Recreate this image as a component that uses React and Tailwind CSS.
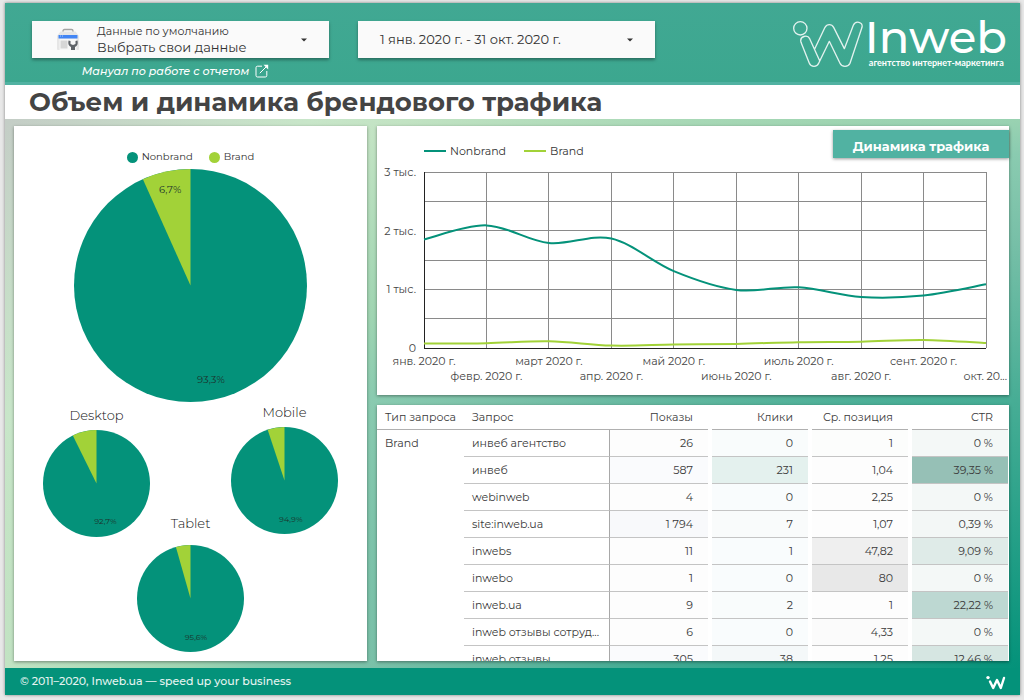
import React from "react";

const NONBRAND = "#04927a";
const BRAND = "#a2d238";

const months = [
  { label: "янв. 2020 г.", nonbrand: 1850, brand: 75 },
  { label: "февр. 2020 г.", nonbrand: 2090, brand: 82 },
  { label: "март 2020 г.", nonbrand: 1790, brand: 116 },
  { label: "апр. 2020 г.", nonbrand: 1865, brand: 42 },
  { label: "май 2020 г.", nonbrand: 1310, brand: 58 },
  { label: "июнь 2020 г.", nonbrand: 990, brand: 70 },
  { label: "июль 2020 г.", nonbrand: 1035, brand: 100 },
  { label: "авг. 2020 г.", nonbrand: 870, brand: 108 },
  { label: "сент. 2020 г.", nonbrand: 895, brand: 138 },
  { label: "окт. 20...", nonbrand: 1085, brand: 85 },
];

const rows = [
  { query: "инвеб агентство", shows: "26", clicks: "0", position: "1", ctr: "0 %", colors: ["bg-[#fdfdfd]", "bg-[#f9fcfc]", "bg-[#fcfdfc]", "bg-[#f4f8f7]"] },
  { query: "инвеб", shows: "587", clicks: "231", position: "1,04", ctr: "39,35 %", colors: ["bg-[#fafbfd]", "bg-[#e4f1ee]", "bg-[#fdfdfd]", "bg-[#96c0b6]"] },
  { query: "webinweb", shows: "4", clicks: "0", position: "2,25", ctr: "0 %", colors: ["bg-[#fdfdfd]", "bg-[#f9fcfd]", "bg-[#fdfdfd]", "bg-[#f4f8f7]"] },
  { query: "site:inweb.ua", shows: "1 794", clicks: "7", position: "1,07", ctr: "0,39 %", colors: ["bg-[#f8f9fb]", "bg-[#f9fbfb]", "bg-[#fdfdfd]", "bg-[#f3f7f6]"] },
  { query: "inwebs", shows: "11", clicks: "1", position: "47,82", ctr: "9,09 %", colors: ["bg-[#fdfdfd]", "bg-[#f9fcfd]", "bg-[#efefef]", "bg-[#dfebe8]"] },
  { query: "inwebo", shows: "1", clicks: "0", position: "80", ctr: "0 %", colors: ["bg-[#fdfdfd]", "bg-[#f9fcfd]", "bg-[#e8e8e8]", "bg-[#f4f8f7]"] },
  { query: "inweb.ua", shows: "9", clicks: "2", position: "1", ctr: "22,22 %", colors: ["bg-[#fdfdfd]", "bg-[#f9fcfc]", "bg-[#fdfdfd]", "bg-[#bdd8d2]"] },
  { query: "inweb отзывы сотруд...", shows: "6", clicks: "0", position: "4,33", ctr: "0 %", colors: ["bg-[#fdfdfd]", "bg-[#f9fcfd]", "bg-[#fbfbfb]", "bg-[#f4f8f7]"] },
  { query: "inweb отзывы", shows: "305", clicks: "38", position: "1,25", ctr: "12,46 %", colors: ["bg-[#fafbfd]", "bg-[#f4f8f9]", "bg-[#fdfdfd]", "bg-[#d6e6e2]"] },
];

const BriefcaseIcon = () => (
  <svg className="w-6 h-6" viewBox="0 0 24 24" aria-hidden="true">
    <path d="M7 4V3Q7 1.500 8.500 1.500h7q1.500 0 1.500 1.500v1" fill="none" stroke="#a3a3a3" strokeWidth="1.3" />
    <path d="M4.500 3.500h15L23 8v13q0 1-1 1H2q-1 0-1-1V8z" fill="#e6e6e6" />
    <path d="M3.500 10.500h17V22h-17z" fill="#f7f7f7" />
    <path d="M2.500 7h19v3.500h-19z" fill="#4285f4" />
    <path d="M4 8h1M6 8h1" stroke="#a9c8fb" />
    <path d="M4.500 12.500h7v8h-7z" fill="#d6d6d6" />
    <path d="M12.500 12.500q-1 5 2.500 6.500v3h4v-3q3.500-1.500 2.500-6.500l-2 .5v3l-2.500 1-2.500-1v-3z" fill="#5f6368" />
  </svg>
);

const OpenIcon = () => (
  <svg className="w-3.5 h-3.5" viewBox="0 0 14 14" fill="none" stroke="currentColor" strokeWidth="1" aria-hidden="true">
    <path d="M7 2.200H2.500Q1 2.200 1 3.700v7.800Q1 13 2.500 13h7.800q1.500 0 1.500-1.500V7" />
    <path d="M4.800 9.200 11 3" />
    <path d="M8.500 .8h4.700v4.700z" fill="currentColor" stroke="none" />
  </svg>
);

const Caret = () => (
  <svg className="w-1.5 h-1 shrink-0" viewBox="0 0 6 4" aria-hidden="true">
    <path d="M0 .5h6L3 3.500z" fill="#333" />
  </svg>
);

const LogoMark = () => (
  <svg
    className="w-[72px] h-[49px] shrink-0"
    viewBox="65 61 216 147"
    fill="none"
    stroke="#fff"
    strokeOpacity="0.85"
    strokeWidth="4"
    strokeLinejoin="round"
    strokeLinecap="round"
    aria-hidden="true"
  >
    <circle cx="90" cy="83" r="20" />
    <path d="M148 180 118 114C111 100 87 107 92 125L117 188C122 200 140 200 145 188L177 122 209 188C214 200 234 200 239 188L275 80C279 63 255 59 249 74L222 144 190 80C184 69 170 69 164 80L133 145" />
  </svg>
);

const FooterMark = () => (
  <svg className="w-5 h-4" viewBox="0 0 20 16" fill="none" stroke="#fff" strokeWidth="2.400" strokeLinecap="round" strokeLinejoin="round" aria-hidden="true">
    <circle cx="2" cy="3.600" r="1.700" fill="#fff" stroke="none" />
    <path d="M4 7.500 7.200 14 11 6 14.800 14 18 4" />
  </svg>
);

const Pie = ({ brand, size, inset, children, label, showBrand }) => {
  const r = size / 2;
  const point = (share, radius) => {
    const angle = share * 2 * Math.PI;
    return [r + radius * Math.sin(angle), r - radius * Math.cos(angle)];
  };
  const [x, y] = point(1 - brand, r);
  const [lx, ly] = point((1 - brand) / 2, r - inset);
  const [bx, by] = point(1 - brand / 2, r - inset);

  return (
    <svg width={size} height={size} viewBox={`0 0 ${size} ${size}`} role="img" aria-label={label}>
      <circle cx={r} cy={r} r={r} fill={NONBRAND} />
      <path d={`M${r} ${r}L${x} ${y}A${r} ${r} 0 0 1 ${r} 0Z`} fill={BRAND} />
      <g textAnchor="middle" dominantBaseline="middle" fill="#1c332d" className={showBrand ? "text-[10px] font-normal" : "text-[8px] font-normal"}>
        <text x={lx} y={ly}>{children}</text>
        {showBrand && <text x={bx} y={by}>{showBrand}</text>}
      </g>
    </svg>
  );
};

const SmallPie = ({ title, brand, value, gap }) => (
  <div className={`flex flex-col items-center ${gap}`}>
    <h3 className="text-[13px] leading-5 text-[#111]">{title}</h3>
    <Pie size={107} brand={brand} inset={14} label={title}>{value}</Pie>
  </div>
);

// plot area of the line chart inside its viewBox
const LEFT = 47;
const TOP = 14;
const WIDTH = 562;
const HEIGHT = 176;

const px = (i) => LEFT + (i * WIDTH) / (months.length - 1);
const py = (value) => TOP + HEIGHT - (value / 3000) * HEIGHT;

const smoothPath = (key) => {
  const pts = months.map((m, i) => [px(i), py(m[key])]);
  let d = `M${pts[0][0]} ${pts[0][1]}`;
  for (let i = 0; i < pts.length - 1; i++) {
    const p0 = pts[i - 1] || pts[i];
    const p1 = pts[i];
    const p2 = pts[i + 1];
    const p3 = pts[i + 2] || p2;
    d += `C${p1[0] + (p2[0] - p0[0]) / 6} ${p1[1] + (p2[1] - p0[1]) / 6} ${p2[0] - (p3[0] - p1[0]) / 6} ${p2[1] - (p3[1] - p1[1]) / 6} ${p2[0]} ${p2[1]}`;
  }
  return d;
};

const LineChart = () => (
  <svg className="block w-full" viewBox="0 0 632 237" role="img" aria-label="Динамика трафика">
    <g stroke="#8a8a8a" shapeRendering="crispEdges">
      {[0, 1, 2, 3, 4, 5].map((i) => (
        <line key={i} x1={LEFT} x2={LEFT + WIDTH} y1={TOP + (i * HEIGHT) / 6} y2={TOP + (i * HEIGHT) / 6} />
      ))}
      {months.map((m, i) => (
        <line key={m.label} x1={px(i)} x2={px(i)} y1={TOP} y2={TOP + HEIGHT} />
      ))}
      <path d={`M${LEFT} ${TOP}V${TOP + HEIGHT}H${LEFT + WIDTH}`} fill="none" stroke="#222" />
    </g>
    <path d={smoothPath("nonbrand")} fill="none" stroke={NONBRAND} strokeWidth="2" />
    <path d={smoothPath("brand")} fill="none" stroke={BRAND} strokeWidth="2" />
    <g className="text-[11px] font-normal" fill="#444">
      {["0", "1 тыс.", "2 тыс.", "3 тыс."].map((t, i) => (
        <text key={t} x={LEFT - 8} y={py(i * 1000) + 4} textAnchor="end">{t}</text>
      ))}
      {months.map((m, i) => {
        const last = i === months.length - 1;
        return (
          <text key={m.label} x={last ? 630 : px(i)} y={i % 2 ? 222 : 207} textAnchor={last ? "end" : "middle"}>
            {m.label}
          </text>
        );
      })}
    </g>
  </svg>
);

const NumberCell = ({ color, children }) => (
  <td className="p-0 pr-1 last:pr-px">
    <div className={`h-[27px] leading-[26px] pr-[15px] border-b border-[#c4c4c4] text-right ${color}`}>{children}</div>
  </td>
);

const QueryTable = () => (
  <table className="w-full table-fixed border-separate border-spacing-0 text-[11px] font-normal text-[#3a3a3a]">
    <colgroup>
      <col className="w-[87px]" />
      <col />
      <col className="w-[102px]" />
      <col className="w-[100px]" />
      <col className="w-[100px]" />
      <col className="w-[97px]" />
    </colgroup>
    <thead>
      <tr>
        <th className="h-[25px] p-0 pl-2 border-b border-[#b0b0b0] text-left font-normal whitespace-nowrap">Тип запроса</th>
        <th className="h-[25px] p-0 pl-2 border-b border-[#b0b0b0] text-left font-normal">Запрос</th>
        {["Показы", "Клики", "Ср. позиция", "CTR"].map((title) => (
          <th key={title} className="p-0 pr-1 last:pr-px font-normal">
            <div className="h-[25px] leading-6 pr-[15px] border-b border-[#b0b0b0] text-right whitespace-nowrap">{title}</div>
          </th>
        ))}
      </tr>
    </thead>
    <tbody>
      {rows.map((row, i) => (
        <tr key={row.query}>
          {i === 0 && (
            <td rowSpan={rows.length} className="p-0 pl-2 align-top leading-[26px]">Brand</td>
          )}
          <td className="h-[27px] p-0 pl-2 border-b border-r border-b-[#c4c4c4] border-r-[#a8a8a8] whitespace-nowrap">{row.query}</td>
          <NumberCell color={row.colors[0]}>{row.shows}</NumberCell>
          <NumberCell color={row.colors[1]}>{row.clicks}</NumberCell>
          <NumberCell color={row.colors[2]}>{row.position}</NumberCell>
          <NumberCell color={row.colors[3]}>{row.ctr}</NumberCell>
        </tr>
      ))}
    </tbody>
  </table>
);

const App = () => {
  return (
    <div className="min-h-screen bg-[#e8e8e8] pt-[3px] pr-1 pb-[5px] pl-[5px] font-['Montserrat','Inter','Noto_Sans',sans-serif] font-light text-[#333]">
      <div className="shadow-[0_0_3px_rgba(0,0,0,0.45)]">
        <header className="flex justify-between pt-[18px] pr-[13px] pl-[27px] h-[82px] bg-gradient-to-b from-[#41a893] to-[#3ca78f] border-b-[3px] border-[#51b2a2]">
          <div className="flex items-start gap-[29px]">
            <div className="w-[297px] flex flex-col items-center">
              <button type="button" aria-haspopup="listbox" className="w-full h-[37px] flex items-center bg-[#fafafa] pl-6 pr-[22px] shadow-[0_2px_3px_rgba(0,0,0,0.35)]">
                <BriefcaseIcon />
                <span className="flex-1 pl-[17px] text-left font-normal">
                  <span className="block text-[11px] leading-[15px]">Данные по умолчанию</span>
                  <span className="block text-[13px] leading-4">Выбрать свои данные</span>
                </span>
                <Caret />
              </button>
              <a href="#manual" className="mt-[5px] pr-2.5 flex items-center gap-1.5 text-[11px] leading-4 italic font-medium text-white">
                Мануал по работе с отчетом
                <OpenIcon />
              </a>
            </div>
            <button type="button" aria-haspopup="dialog" className="w-[297px] h-[37px] flex items-center justify-between bg-[#fafafa] pl-[22px] pr-[22px] text-[13px] font-normal shadow-[0_2px_3px_rgba(0,0,0,0.35)]">
              1 янв. 2020 г. - 31 окт. 2020 г.
              <Caret />
            </button>
          </div>
          <a href="#inweb" className="flex items-start gap-px text-white" aria-label="Inweb">
            <LogoMark />
            <span className="flex flex-col">
              <span className="text-[45px] leading-8 font-medium">Inweb</span>
              <span className="pl-1 text-[9px] leading-5 font-bold font-['Lato',sans-serif]">агентство интернет-маркетинга</span>
            </span>
          </a>
        </header>

        <h1 className="pl-6 h-[34px] bg-white text-[26px] leading-[34px] font-bold text-[#444]">
          Объем и динамика брендового трафика
        </h1>

        <main className="grid grid-cols-[minmax(0,353fr)_minmax(0,632fr)] gap-2.5 pt-[7px] pr-[11px] pb-[7px] pl-[9px] bg-[radial-gradient(100%_125%_at_100%_100%,#04927a_0%,#47ad95_39%,#79c0a8_63%,#8acbb0_75%,#a0d5b2_82%,#c2e3c3_100%,#c8e6c9_106%,#c4cdc6_128%)]">
          <section className="bg-white pt-[23px] pb-[9px] shadow-[0_1px_3px_rgba(0,0,0,0.4)] flex flex-col">
            <div className="flex justify-center gap-4 text-[10px] leading-4 font-normal">
              <span className="flex items-center gap-1">
                <span className="w-[11px] h-[11px] rounded-full bg-[#04927a]" />
                Nonbrand
              </span>
              <span className="flex items-center gap-1">
                <span className="w-[11px] h-[11px] rounded-full bg-[#a2d238]" />
                Brand
              </span>
            </div>
            <div className="mt-1 flex justify-center">
              <Pie size={233} brand={0.067} inset={19} label="Nonbrand / Brand" showBrand="6,7%">93,3%</Pie>
            </div>
            <div className="flex items-start justify-between px-[29px]">
              <SmallPie title="Desktop" brand={0.073} gap="mt-[3px] gap-[5px]" value="92,7%" />
              <SmallPie title="Mobile" brand={0.051} gap="gap-[5px]" value="94,9%" />
            </div>
            <div className="-mt-6 flex justify-center">
              <SmallPie title="Tablet" brand={0.044} gap="gap-3" value="95,6%" />
            </div>
          </section>

          <div className="flex flex-col gap-2.5">
            <section className="bg-white pt-1 shadow-[0_1px_3px_rgba(0,0,0,0.4)]">
              <div className="flex items-start justify-between pl-[47px]">
                <div className="flex gap-[18px] pt-[13px] text-[11px] leading-4 h-7 font-normal">
                  <span className="flex items-center gap-1">
                    <span className="w-[22px] h-0.5 bg-[#04927a]" />
                    Nonbrand
                  </span>
                  <span className="flex items-center gap-1">
                    <span className="w-[22px] h-0.5 bg-[#a2d238]" />
                    Brand
                  </span>
                </div>
                <h2 className="w-[176px] h-7 bg-[#51b2a2] text-center text-[13px] leading-8 font-bold text-white shadow-[0_1px_3px_rgba(0,0,0,0.4)]">
                  Динамика трафика
                </h2>
              </div>
              <LineChart />
            </section>

            <section className="bg-white h-64 overflow-hidden shadow-[0_1px_3px_rgba(0,0,0,0.4)]">
              <QueryTable />
            </section>
          </div>
        </main>

        <footer className="flex items-center justify-between h-[27px] pl-[15px] pr-3.5 bg-[#04927a] text-[11px] font-medium text-[#e6f4f1]">
          © 2011–2020, Inweb.ua — speed up your business
          <FooterMark />
        </footer>
      </div>
    </div>
  );
};

export default App;
